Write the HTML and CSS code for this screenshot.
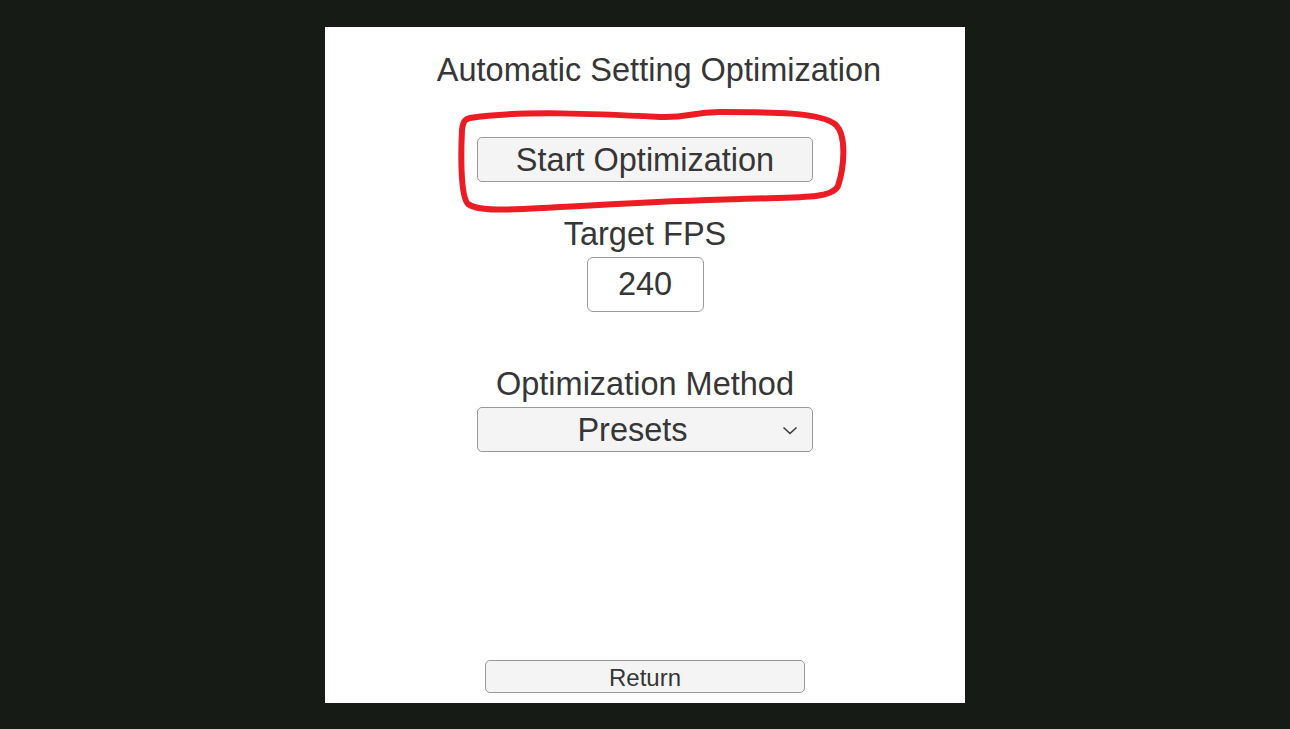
FILE: index.html
```html
<!DOCTYPE html>
<html>
<head>
<meta charset="utf-8">
<link rel="stylesheet" href="styles.css">
</head>
<body>
<div class="panel">
  <div class="title">Automatic Setting Optimization</div>
  <div class="btn start">Start Optimization</div>
  <div class="label fps-label">Target FPS</div>
  <div class="input">240</div>
  <div class="label method-label">Optimization Method</div>
  <div class="select"><span class="select-text">Presets</span>
    <svg class="chev" width="16" height="9" viewBox="0 0 16 9"><path d="M1.5 1.5 L8 7.5 L14.5 1.5" fill="none" stroke="#3a3a3a" stroke-width="1.6"/></svg>
  </div>
  <div class="btn return">Return</div>
  <svg class="scribble" width="640" height="676" viewBox="325 27 640 676">
    <path d="M 470 118 C 520 110, 600 114, 660 117 C 690 118, 690 112, 720 112 C 770 112, 822 112, 836 125 C 847 136, 844 168, 838 186 C 832 199, 800 197, 740 199 C 660 201, 600 205, 560 207 C 520 209, 480 213, 468 204 C 460 196, 461 150, 462 130 C 463 120, 466 119, 470 118 Z" fill="none" stroke="#ec1c24" stroke-width="6" stroke-linejoin="round"/>
  </svg>
</div>
</body>
</html>
```
FILE: styles.css
```css
html, body {
  margin: 0;
  padding: 0;
  background: #161b16;
  width: 1290px;
  height: 729px;
  overflow: hidden;
}
body {
  font-family: "Liberation Sans", Arial, sans-serif;
  color: #363636;
}
.panel {
  position: relative;
  width: 640px;
  height: 676px;
  margin: 27px auto 0;
  background: #ffffff;
  box-sizing: border-box;
  padding: 25px 0 10px;
  display: flex;
  flex-direction: column;
  align-items: center;
}
.title {
  font-size: 32.5px;
  line-height: 37px;
  padding-left: 28px;
  white-space: nowrap;
}
.btn {
  box-sizing: border-box;
  background: #f4f4f4;
  border: 1px solid #9a9a9a;
  border-radius: 5px;
  display: flex;
  align-items: center;
  justify-content: center;
  white-space: nowrap;
}
.start {
  margin-top: 48px;
  width: 336px;
  height: 45px;
  font-size: 32.5px;
  padding-top: 1px;
}
.label {
  font-size: 32.5px;
  line-height: 37px;
  white-space: nowrap;
}
.fps-label {
  margin-top: 34px;
}
.input {
  margin-top: 4px;
  box-sizing: border-box;
  width: 117px;
  height: 55px;
  border: 1px solid #9a9a9a;
  border-radius: 6px;
  background: #ffffff;
  font-size: 32.5px;
  display: flex;
  align-items: center;
  justify-content: center;
}
.method-label {
  margin-top: 54px;
}
.select {
  margin-top: 4px;
  position: relative;
  box-sizing: border-box;
  width: 336px;
  height: 45px;
  background: #f4f4f4;
  border: 1px solid #9a9a9a;
  border-radius: 5px;
  font-size: 32.5px;
  display: flex;
  align-items: center;
  justify-content: center;
  padding-right: 25px;
  padding-top: 2px;
}
.chev {
  position: absolute;
  right: 14px;
  top: 18px;
}
.return {
  margin-top: auto;
  width: 320px;
  height: 33px;
  font-size: 24px;
  padding-top: 2px;
}
.scribble {
  position: absolute;
  left: 0;
  top: 0;
  pointer-events: none;
}
```
